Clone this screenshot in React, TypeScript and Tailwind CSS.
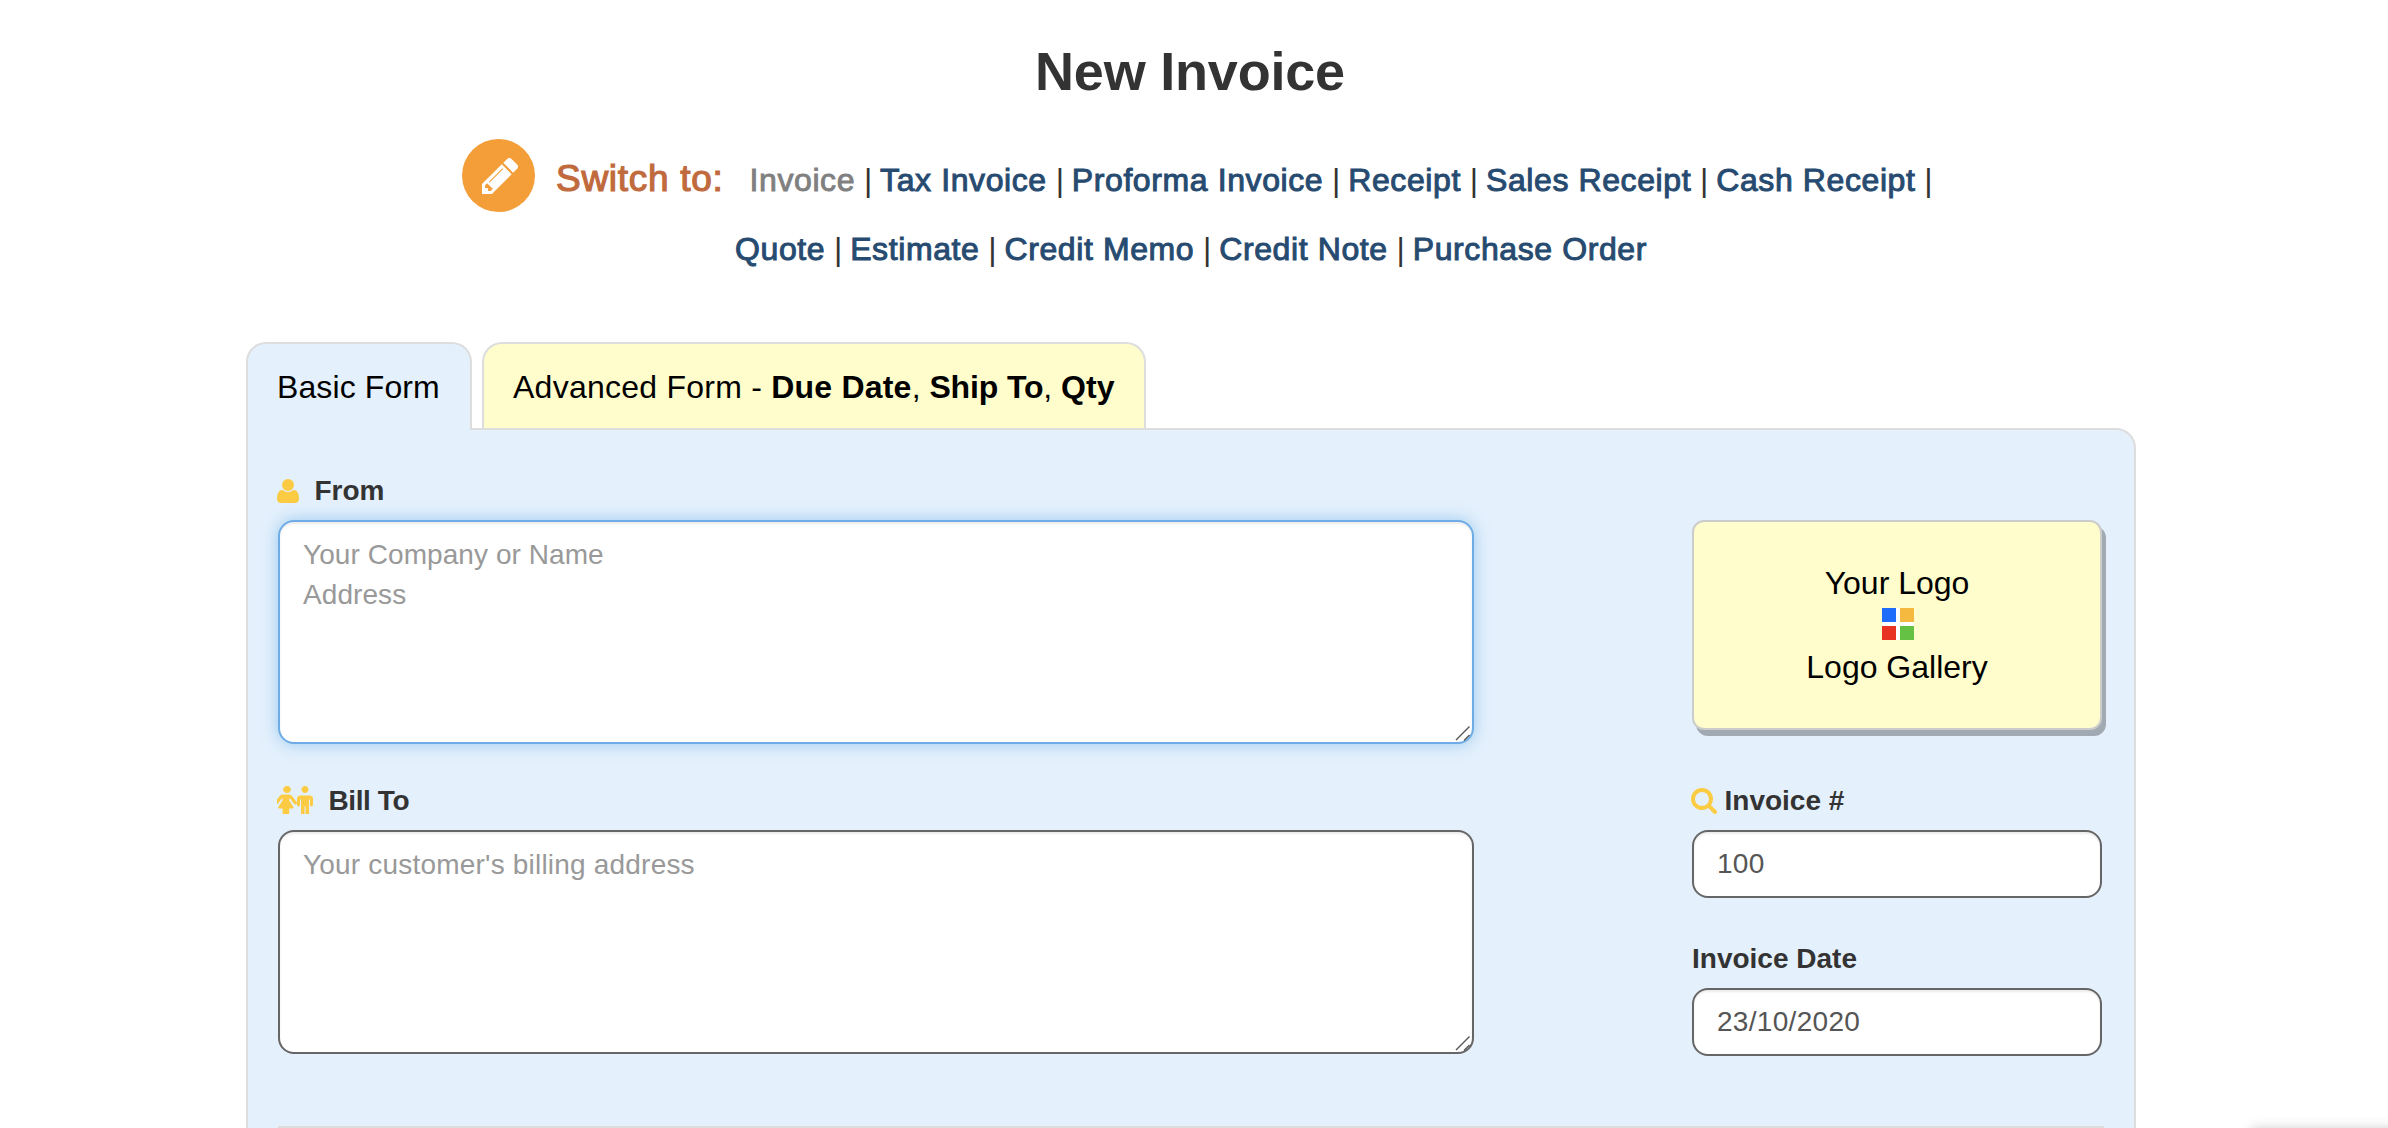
import React from "react";

function PencilIcon() {
  return (
    <svg viewBox="128 149 1515 1515" className="h-9 w-9 fill-white">
      <path d="M491 1536l91-91-235-235-91 91v107h128v128h107zm523-928q0-22-22-22-10 0-17 7l-542 542q-7 7-7 17 0 22 22 22 10 0 17-7l542-542q7-7 7-17zm-54-192l416 416-832 832h-416v-416zm683 96q0 53-37 90l-166 166-416-416 166-165q36-38 90-38 53 0 91 38l235 234q37 39 37 91z" />
    </svg>
  );
}

function UserIcon() {
  return (
    <svg viewBox="192 128 1408 1536" className="h-6 w-[22px] fill-[#fbcb43]">
      <path d="M1600 1405q0 120-73 189.5t-194 69.5h-874q-121 0-194-69.5t-73-189.5q0-53 3.5-103.5t14-109 26.5-108.5 43-97.5 62-81 85.5-53.5 111.5-20q9 0 42 21.5t74.5 48 108 48 133.5 21.5 133.5-21.5 108-48 74.5-48 42-21.5q61 0 111.5 20t85.5 53.5 62 81 43 97.5 26.5 108.5 14 109 3.5 103.5zm-320-893q0 159-112.5 271.5t-271.5 112.5-271.5-112.5-112.5-271.5 112.5-271.5 271.5-112.5 271.5 112.5 112.5 271.5z" />
    </svg>
  );
}

function FemaleIcon() {
  return (
    <svg viewBox="320 32 1152 1792" className="h-7 w-5 fill-[#fbcb43]" preserveAspectRatio="none">
      <path d="M1472 1120q0 40-28 68t-68 28q-51 0-80-43l-227-341h-45v132l247 411q9 15 9 33 0 26-19 45t-45 19h-192v272q0 46-33 79t-79 33h-160q-46 0-79-33t-33-79v-272h-192q-26 0-45-19t-19-45q0-18 9-33l247-411v-132h-45l-227 341q-29 43-80 43-40 0-68-28t-28-68q0-29 16-53l256-384q73-107 176-107h384q103 0 176 107l256 384q16 24 16 53zm-352-864q0 93-65.5 158.5t-158.5 65.5-158.5-65.5-65.5-158.5 65.5-158.5 158.5-65.5 158.5 65.5 65.5 158.5z" />
    </svg>
  );
}

function MaleIcon() {
  return (
    <svg viewBox="384 32 1024 1792" className="h-7 w-4 fill-[#fbcb43]">
      <path d="M1408 832v416q0 40-28 68t-68 28-68-28-28-68v-352h-64v912q0 46-33 79t-79 33-79-33-33-79v-464h-64v464q0 46-33 79t-79 33-79-33-33-79v-912h-64v352q0 40-28 68t-68 28-68-28-28-68v-416q0-80 56-136t136-56h640q80 0 136 56t56 136zm-288-576q0 93-65.5 158.5t-158.5 65.5-158.5-65.5-65.5-158.5 65.5-158.5 158.5-65.5 158.5 65.5 65.5 158.5z" />
    </svg>
  );
}

function SearchIcon() {
  return (
    <svg viewBox="64 128 1664 1664" className="h-[26px] w-[26px] fill-[#fbcb43]">
      <path d="M1216 832q0-185-131.5-316.5t-316.5-131.5-316.5 131.5-131.5 316.5 131.5 316.5 316.5 131.5 316.5-131.5 131.5-316.5zm512 832q0 52-38 90t-90 38q-54 0-90-38l-343-342q-179 124-399 124-143 0-273.5-55.5t-225-150-150-225-55.5-273.5 55.5-273.5 150-225 225-150 273.5-55.5 273.5 55.5 225 150 150 225 55.5 273.5q0 220-124 399l343 343q37 37 37 90z" />
    </svg>
  );
}

function Links({ items, trailing }: { items: string[]; trailing?: boolean }) {
  return (
    <>
      {items.map((item, i) => (
        <React.Fragment key={item}>
          <a
            className={
              item === "Invoice"
                ? "tracking-[0.6px] text-[#808080] [-webkit-text-stroke:0.9px_#808080]"
                : "tracking-[0.6px] text-[#274b70] [-webkit-text-stroke:1px_#274b70]"
            }
          >
            {item}
          </a>
          {(trailing || i < items.length - 1) && (
            <span className="w-[25px] pl-px text-center text-[#333]">|</span>
          )}
        </React.Fragment>
      ))}
    </>
  );
}

function AddressBox({ placeholder, focused }: { placeholder: string; focused?: boolean }) {
  return (
    <div className="relative h-[224px] w-[1196px]">
      <textarea
        placeholder={placeholder}
        className={
          focused
            ? "block h-full w-full resize-none overflow-hidden rounded-[16px] border-2 border-[#6face6] bg-white px-[23px] pt-[13px] text-[28px] leading-[40px] tracking-[0.07px] shadow-[inset_0_2px_2px_rgba(0,0,0,0.075),0_0_16px_rgba(102,175,233,0.6)] outline-none placeholder:text-[#999]"
            : "block h-full w-full resize-none overflow-hidden rounded-[16px] border-2 border-[#666] bg-white px-[23px] pt-[13px] text-[28px] leading-[40px] tracking-[0.2px] shadow-[inset_0_2px_2px_rgba(0,0,0,0.075)] outline-none placeholder:text-[#999]"
        }
      />
      <svg viewBox="0 0 16 16" className="absolute right-1 bottom-[3px] h-4 w-4" fill="none" stroke="#555" strokeWidth="1.4">
        <path d="M2 15L15.5 1.5M10 15.5L15.5 10" />
      </svg>
    </div>
  );
}

function Field({ value }: { value: string }) {
  return (
    <input
      defaultValue={value}
      className="block h-[68px] w-[410px] rounded-[16px] border-2 border-[#666] bg-white px-[23px] pb-px text-[28px] leading-[40px] tracking-[0.3px] text-[#555] shadow-[inset_0_2px_2px_rgba(0,0,0,0.075)] outline-none"
    />
  );
}

export default function App() {
  return (
    <div className="relative h-[1128px] w-[2388px] overflow-hidden bg-white font-['Liberation_Sans',Arial,sans-serif] text-[#333]">
      <h1 className="w-[2380px] pt-10 text-center text-[54px] leading-[62px] font-bold tracking-[-0.2px]">New Invoice</h1>

      <nav className="flex h-[240px] flex-col pt-[37px] text-[32px] leading-[70px] whitespace-nowrap">
        <div className="flex h-[75px] pl-[462px]">
          <div className="flex h-[73px] w-[73px] items-center justify-center rounded-full bg-[#f39e38] pl-0.5">
            <PencilIcon />
          </div>
          <span className="mt-[5px] w-[192px] pl-[21px] text-[37px] tracking-[0.7px] text-[#c06a3e] [-webkit-text-stroke:1.2px_#c06a3e]">
            Switch to:
          </span>
          <div className="mt-[6px] flex pl-[22.5px]">
            <Links trailing items={["Invoice", "Tax Invoice", "Proforma Invoice", "Receipt", "Sales Receipt", "Cash Receipt"]} />
          </div>
        </div>
        <div className="flex pl-[735px]">
          <Links items={["Quote", "Estimate", "Credit Memo", "Credit Note", "Purchase Order"]} />
        </div>
      </nav>

      <main className="ml-[246px] w-[1890px]">
        <div className="relative z-10 -mb-0.5 flex gap-[10px] text-[32px] leading-[44px] text-black">
          <div className="h-[88px] w-[226px] rounded-t-[20px] border-2 border-b-0 border-[#ddd] bg-[#e4f0fc] pt-[21px] pl-[29px] tracking-[0.1px] whitespace-nowrap">
            Basic Form
          </div>
          <div className="h-[86px] w-[664px] rounded-t-[20px] border-2 border-b-0 border-[#ddd] bg-[#fffdcb] pt-[21px] pl-[29px] whitespace-nowrap">
            <span className="tracking-[0.25px]">Advanced Form - </span>
            <b className="tracking-[0.2px]">Due Date</b>, <b className="tracking-[-0.15px]">Ship To</b>, <b>Qty</b>
          </div>
        </div>

        <section className="h-[720px] rounded-tr-[20px] border-2 border-[#ddd] bg-[#e4f0fc] pr-[30px] pl-[30px]">
          <div className="flex h-[696px] justify-between pt-10">
            <div>
              <div className="flex h-[50px] items-center gap-[15.5px] pb-2 text-[28px] font-bold">
                <div className="-ml-px pb-px"><UserIcon /></div>
                From
              </div>
              <AddressBox focused placeholder={"Your Company or Name\nAddress"} />
              <div className="mt-9 flex h-[50px] items-center gap-[15.5px] pb-2 text-[28px] font-bold tracking-[-0.4px]">
                <div className="-ml-px flex pb-0.5"><FemaleIcon /><MaleIcon /></div>
                Bill To
              </div>
              <AddressBox placeholder="Your customer's billing address" />
            </div>

            <div className="mr-0.5 w-[410px] pt-[50px]">
              <div className="flex h-[210px] flex-col items-center rounded-[12px] border-2 border-[#ccc] bg-[#fffdcb] pt-10 text-[32px] leading-[42px] text-black shadow-[4px_6px_0_#a1a9b3]">
                <span>Your Logo</span>
                <div className="mt-1 mb-[6px] ml-0.5 grid h-8 w-8 grid-cols-2 gap-1 bg-white">
                  <i className="bg-[#206cfa]" />
                  <i className="bg-[#f6b940]" />
                  <i className="bg-[#e83223]" />
                  <i className="bg-[#64c143]" />
                </div>
                <span>Logo Gallery</span>
              </div>
              <div className="mt-[50px] flex h-[50px] items-center gap-[7.5px] pb-2 text-[28px] font-bold">
                <div className="-ml-px"><SearchIcon /></div>
                Invoice #
              </div>
              <Field value="100" />
              <div className="mt-10 flex h-[50px] items-center pb-2 text-[28px] font-bold">Invoice Date</div>
              <Field value="23/10/2020" />
            </div>
          </div>
          <hr className="border-t-2 border-[#ddd]" />
        </section>
      </main>
      <div className="absolute top-[1130px] right-[-20px] h-10 w-[156px] shadow-[0_0_12px_rgba(0,0,0,0.26)]" />
    </div>
  );
}
